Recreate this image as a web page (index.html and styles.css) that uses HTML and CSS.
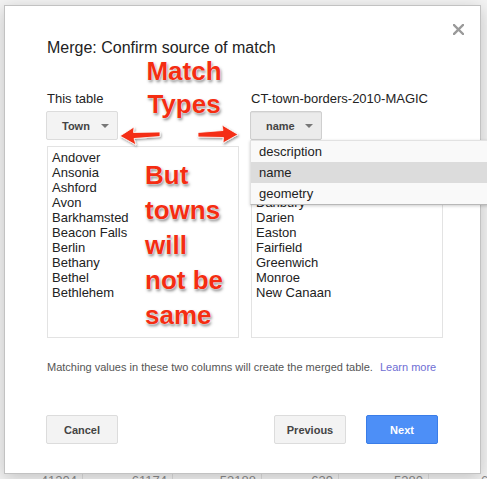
FILE: index.html
```html
<!DOCTYPE html>
<html>
<head>
<meta charset="utf-8">
<link rel="stylesheet" href="styles.css">
</head>
<body>
<div class="page">
  <div class="bg-row">
    <div class="bg-cell c1">41204</div>
    <div class="bg-cell c2">61174</div>
    <div class="bg-cell c3">53188</div>
    <div class="bg-cell c4">639</div>
    <div class="bg-cell c5">5380</div>
    <div class="bg-cell c6">6</div>
  </div>
</div>

<div class="dialog">
  <button class="close" aria-label="Close">
    <svg width="11" height="11" viewBox="0 0 11 11"><path d="M1 1L10 10M10 1L1 10" stroke="#9a9a9a" stroke-width="2.4" stroke-linecap="square"/></svg>
  </button>
  <div class="title">Merge: Confirm source of match</div>

  <div class="columns">
    <div class="col">
      <div class="label">This table</div>
      <div class="btn-wrap">
        <div class="select">Town<span class="caret"></span></div>
      </div>
      <div class="list">
        <div>Andover</div>
        <div>Ansonia</div>
        <div>Ashford</div>
        <div>Avon</div>
        <div>Barkhamsted</div>
        <div>Beacon Falls</div>
        <div>Berlin</div>
        <div>Bethany</div>
        <div>Bethel</div>
        <div>Bethlehem</div>
      </div>
    </div>
    <div class="col">
      <div class="label">CT-town-borders-2010-MAGIC</div>
      <div class="btn-wrap">
        <div class="select active">name<span class="caret"></span></div>
        <div class="menu">
          <div class="item">description</div>
          <div class="item hl">name</div>
          <div class="item">geometry</div>
        </div>
      </div>
      <div class="list">
        <div>Bethel</div>
        <div>Bridgeport</div>
        <div>Brookfield</div>
        <div>Danbury</div>
        <div>Darien</div>
        <div>Easton</div>
        <div>Fairfield</div>
        <div>Greenwich</div>
        <div>Monroe</div>
        <div>New Canaan</div>
      </div>
    </div>
  </div>

  <div class="note">Matching values in these two columns will create the merged table. <a class="learn" href="#">Learn more</a></div>

  <div class="actions">
    <div class="btn">Cancel</div>
    <div class="btn prev">Previous</div>
    <div class="btn primary">Next</div>
  </div>

  <div class="anno anno-top">Match<br>Types</div>
  <div class="anno anno-mid">But<br>towns<br>will<br>not be<br>same</div>
  <svg class="arrows" width="135" height="34" viewBox="115 120 135 34">
    <defs>
      <filter id="sh" x="-20%" y="-40%" width="140%" height="180%">
        <feDropShadow dx="1" dy="1.5" stdDeviation="1.2" flood-color="#000" flood-opacity="0.4"/>
      </filter>
    </defs>
    <polygon filter="url(#sh)" fill="#f42d12" stroke="#fff" stroke-width="0.8" points="120,136 134,127 133.5,132.5 160,132 160,136.5 134,138.5 136,145"/>
    <polygon filter="url(#sh)" fill="#f42d12" stroke="#fff" stroke-width="0.8" points="198,132.5 223,130.5 222,125 238,134.5 223,143 223.5,137.5 198,137"/>
  </svg>
</div>
</body>
</html>
```

FILE: styles.css
```css
html, body {
  margin: 0;
  padding: 0;
}
body {
  width: 487px;
  height: 479px;
  overflow: hidden;
  background: #f3f3f3;
  font-family: "Liberation Sans", Arial, sans-serif;
  position: relative;
}
.page {
  padding-top: 472px;
}
.bg-row {
  display: flex;
  height: 24px;
  color: #8a8a8a;
  font-size: 13px;
  line-height: 18px;
}
.bg-cell {
  box-sizing: border-box;
  text-align: right;
  padding-right: 5px;
  border-right: 1px solid #dcdcdc;
  flex: none;
}
.c1 { width: 83px; }
.c2 { width: 90px; }
.c3 { width: 89px; }
.c4 { width: 77px; }
.c5 { width: 90px; }
.c6 { width: 60px; text-align: left; padding-left: 52px; border-right: 0; }

.dialog {
  position: absolute;
  left: 4px;
  top: 5px;
  width: 477px;
  height: 469px;
  box-sizing: border-box;
  background: #fff;
  border: 1px solid #c2c2c2;
  box-shadow: 0 4px 16px rgba(0, 0, 0, 0.2);
  padding: 32px 42px 0 42px;
}
.close {
  position: absolute;
  top: 18px;
  left: 448px;
  width: 11px;
  height: 11px;
  padding: 0;
  border: 0;
  background: none;
  display: block;
}
.close svg { display: block; }
.title {
  font-size: 16px;
  line-height: 20px;
  color: #222;
}
.columns {
  margin-top: 33px;
  display: grid;
  grid-template-columns: 192px 192px;
  column-gap: 12px;
}
.label {
  font-size: 13px;
  line-height: 16px;
  color: #222;
}
.btn-wrap {
  position: relative;
  margin-top: 4px;
  margin-left: -1px;
  height: 29px;
}
.select {
  box-sizing: border-box;
  width: 72px;
  height: 29px;
  display: flex;
  align-items: center;
  justify-content: space-between;
  padding: 0 8px 0 15px;
  background: #f3f3f3;
  border: 1px solid #dcdcdc;
  border-radius: 2px;
  font-size: 11px;
  font-weight: bold;
  color: #444;
}
.select.active {
  background: #ebebeb;
  border-color: #cfcfcf;
  box-shadow: inset 0 1px 1px rgba(0,0,0,0.05);
}
.caret {
  width: 0;
  height: 0;
  border-left: 4px solid transparent;
  border-right: 4px solid transparent;
  border-top: 4px solid #777;
}
.menu {
  position: absolute;
  left: 0;
  top: 29px;
  width: 250px;
  background: #f9f9f9;
  border-top: 1px solid #e2e2e2;
  border-left: 1px solid #e2e2e2;
  border-bottom: 1px solid #b8b8b8;
  box-shadow: 0 1px 3px rgba(0,0,0,0.2);
  z-index: 2;
}
.item {
  height: 21px;
  line-height: 21px;
  padding-left: 8px;
  font-size: 13px;
  color: #222;
}
.item.hl {
  background: #dcdcdc;
}
.list {
  box-sizing: border-box;
  margin-top: 6px;
  height: 192px;
  border: 1px solid #e3e3e3;
  padding: 3px 4px;
  font-size: 13px;
  line-height: 15px;
  color: #222;
}
.note {
  margin-top: 22px;
  font-size: 11px;
  line-height: 14px;
  color: #555;
}
.learn {
  color: #6e6ed4;
  text-decoration: none;
  margin-left: 4px;
}
.actions {
  margin-top: 41px;
  margin-left: -1px;
  display: flex;
  gap: 20px;
}
.btn {
  box-sizing: border-box;
  width: 72px;
  height: 29px;
  display: flex;
  align-items: center;
  justify-content: center;
  background: #f3f3f3;
  border: 1px solid #dcdcdc;
  border-radius: 2px;
  font-size: 11px;
  font-weight: bold;
  color: #444;
}
.btn.prev {
  margin-left: auto;
}
.btn.primary {
  background: #4d8ff7;
  border-color: #3a7de8;
  color: #fff;
}
.anno {
  position: absolute;
  color: #f42d12;
  font-size: 26px;
  font-weight: bold;
  text-shadow: 0 0 1px #fff, 0 0 2px #fff, 1px 2px 3px rgba(0,0,0,0.5);
}
.anno-top {
  left: 131px;
  top: 49px;
  width: 96px;
  text-align: center;
  line-height: 33px;
}
.anno-mid {
  left: 140px;
  top: 152px;
  line-height: 35px;
}
.arrows {
  position: absolute;
  left: 110px;
  top: 114px;
}
```
